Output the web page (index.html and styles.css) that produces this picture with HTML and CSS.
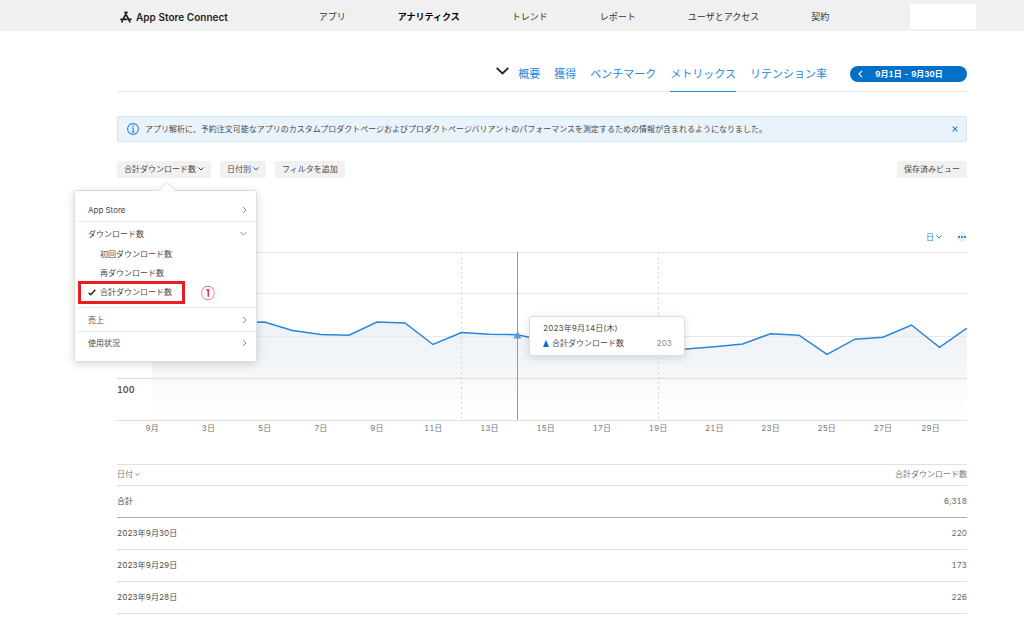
FILE: index.html
```html
<!DOCTYPE html>
<html lang="ja">
<head>
  <meta charset="utf-8">
  <meta name="viewport" content="width=device-width, initial-scale=1">
  <title>App Store Connect</title>
  <link rel="stylesheet" href="styles.css">
</head>
<body>
  <header class="topbar">
    <a class="brand" href="#">
      <svg width="12" height="12" viewBox="0 0 12 12" fill="none" stroke="#1d1d1f" stroke-width="1.7" stroke-linecap="round">
        <path d="M5 1.2l4.9 9.6M7 1.2L3.2 8M1 8.3h5.6M9 8.3h2M2.3 10l-.4.8"/>
      </svg>
      App Store Connect
    </a>
    <nav class="main-nav">
      <a href="#">アプリ</a>
      <a href="#" class="current">アナリティクス</a>
      <a href="#">トレンド</a>
      <a href="#">レポート</a>
      <a href="#">ユーザとアクセス</a>
      <a href="#">契約</a>
    </nav>
    <div class="account"></div>
  </header>

  <main class="content">
    <div class="subnav">
      <button class="app-toggle" aria-label="App">
        <svg width="13" height="8" viewBox="0 0 13 8" fill="none" stroke="#222" stroke-width="1.8"><path d="M.7 .9l5.8 5.6L12.3 .9"/></svg>
      </button>
      <nav class="tabs">
        <a href="#">概要</a>
        <a href="#">獲得</a>
        <a href="#">ベンチマーク</a>
        <a href="#" class="active">メトリックス</a>
        <a href="#">リテンション率</a>
      </nav>
      <button class="date-range">
        <svg width="5" height="8" viewBox="0 0 5 8" fill="none" stroke="#fff" stroke-width="1.1"><path d="M4 .8L1 4l3 3.2"/></svg>
        <span>9月1日 - 9月30日</span>
      </button>
    </div>

    <div class="notice">
      <svg width="12" height="12" viewBox="0 0 12 12" fill="none" stroke="#2a85d8">
        <circle cx="6" cy="6" r="5.4" stroke-width="1.1"/>
        <path d="M4.8 5h1.4v3.8M4.6 9h3" stroke-width="1.1"/>
        <circle cx="6" cy="3" r=".8" fill="#2a85d8" stroke="none"/>
      </svg>
      <p>アプリ解析に、予約注文可能なアプリのカスタムプロダクトページおよびプロダクトページバリアントのパフォーマンスを測定するための情報が含まれるようになりました。</p>
      <button class="close" aria-label="閉じる">
        <svg width="6" height="6" viewBox="0 0 6 6" stroke="#2a85d8" stroke-width="1.2"><path d="M.7 .7l4.6 4.6M5.3 .7L.7 5.3"/></svg>
      </button>
    </div>

    <div class="filters">
      <div class="metric">
        <button class="btn">合計ダウンロード数
          <svg width="6" height="4" viewBox="0 0 6 4" fill="none" stroke="#444"><path d="M.5 .5L3 3l2.5-2.5"/></svg>
        </button>
        <div class="menu">
          <button class="menu-row">App Store
            <svg width="5" height="8" viewBox="0 0 5 8" fill="none" stroke="#888"><path d="M1 1l3 3-3 3"/></svg>
          </button>
          <div class="menu-group">
            <button class="menu-row">ダウンロード数
              <svg width="7" height="5" viewBox="0 0 7 5" fill="none" stroke="#888"><path d="M.5 1l3 3 3-3"/></svg>
            </button>
            <button class="menu-item">初回ダウンロード数</button>
            <button class="menu-item">再ダウンロード数</button>
            <button class="menu-item selected">
              <svg width="8" height="7" viewBox="0 0 8 7" fill="none" stroke="#222" stroke-width="1.4"><path d="M.7 3.8l2 2L7.3 .8"/></svg>
              合計ダウンロード数
              <span class="highlight"></span>
              <span class="step">①</span>
            </button>
          </div>
          <button class="menu-row">売上
            <svg width="5" height="8" viewBox="0 0 5 8" fill="none" stroke="#888"><path d="M1 1l3 3-3 3"/></svg>
          </button>
          <button class="menu-row last">使用状況
            <svg width="5" height="8" viewBox="0 0 5 8" fill="none" stroke="#888"><path d="M1 1l3 3-3 3"/></svg>
          </button>
        </div>
      </div>
      <button class="btn">日付別
        <svg width="6" height="4" viewBox="0 0 6 4" fill="none" stroke="#444"><path d="M.5 .5L3 3l2.5-2.5"/></svg>
      </button>
      <button class="btn">フィルタを追加</button>
      <button class="btn saved">保存済みビュー</button>
    </div>

    <div class="chart-tools">
      <button class="interval">日
        <svg width="6" height="4" viewBox="0 0 6 4" fill="none" stroke="#2a85d8"><path d="M.5 .5L3 3l2.5-2.5"/></svg>
      </button>
      <button class="more" aria-label="その他">
        <svg width="8" height="2" viewBox="0 0 8 2" fill="#0070c9"><circle cx="1" cy="1" r="1"/><circle cx="4" cy="1" r="1"/><circle cx="7" cy="1" r="1"/></svg>
      </button>
    </div>

    <div class="chart">
      <svg class="plot" viewBox="0 0 850 169" preserveAspectRatio="none">
        <defs>
          <linearGradient id="fade" gradientUnits="userSpaceOnUse" x1="0" y1="70" x2="0" y2="168">
            <stop offset="0" stop-color="#edf2f7"/>
            <stop offset=".57" stop-color="#f5f7f9"/>
            <stop offset=".58" stop-color="#f8faf9"/>
            <stop offset="1" stop-color="#fff"/>
          </linearGradient>
        </defs>
        <path class="area" d="M35 76L63 80 91 74 119 71 147.500 70 175.500 78.500 204 82.500 232 83.200 260 70 288 71 316 92.500 344.500 80.500 372.500 82.300 400.500 82.700 429 89 457 93 485 96 513 98 541 99 569 97 597.500 94.700 625.500 92 653.500 81.800 682 83.200 710 102.300 738 87.200 766 85.200 794.500 73 822.500 95.300 850 76V168H35z"/>
        <path class="grid" d="M0 .5H850M0 41.500H850M0 84.500H850"/>
        <path class="grid strong" d="M0 126.500H850M0 168.500H850"/>
        <path class="marker" d="M344.500 0V168M541.500 0V168"/>
        <path class="cursor" d="M400.500 0V168"/>
        <path class="line" d="M35 76L63 80 91 74 119 71 147.500 70 175.500 78.500 204 82.500 232 83.200 260 70 288 71 316 92.500 344.500 80.500 372.500 82.300 400.500 82.700 429 89 457 93 485 96 513 98 541 99 569 97 597.500 94.700 625.500 92 653.500 81.800 682 83.200 710 102.300 738 87.200 766 85.200 794.500 73 822.500 95.300 850 76"/>
        <path class="point" d="M400.500 79l4 7.500h-8z"/>
      </svg>
      <span class="y-label">100</span>
      <div class="tooltip">
        <div>2023年9月14日(木)</div>
        <div class="tooltip-row">
          <svg width="6" height="7" viewBox="0 0 6 7" fill="#0070c9"><path d="M3 0l3 7H0z"/></svg>
          合計ダウンロード数 <span class="value">203</span>
        </div>
      </div>
    </div>
    <div class="x-labels">
      <span>9月</span><span>3日</span><span>5日</span><span>7日</span><span>9日</span>
      <span>11日</span><span>13日</span><span>15日</span><span>17日</span><span>19日</span>
      <span>21日</span><span>23日</span><span>25日</span><span>27日</span><span>29日</span>
    </div>

    <table class="data">
      <thead>
        <tr>
          <th>日付 <svg width="5" height="3" viewBox="0 0 5 3" fill="none" stroke="#888"><path d="M.5 .3l2 2 2-2"/></svg></th>
          <th>合計ダウンロード数</th>
        </tr>
      </thead>
      <tbody>
        <tr class="total"><td>合計</td><td>6,318</td></tr>
        <tr><td>2023年9月30日</td><td>220</td></tr>
        <tr><td>2023年9月29日</td><td>173</td></tr>
        <tr><td>2023年9月28日</td><td>226</td></tr>
      </tbody>
    </table>
  </main>
</body>
</html>
```
FILE: styles.css
```css
* {
  box-sizing: border-box;
}
body {
  margin: 0;
  background: #fff;
  color: #4a4a4a;
  font-family: Inter, "Noto Sans CJK JP", sans-serif;
  font-size: 8px;
  font-variant-numeric: tabular-nums;
  line-height: 12px;
}
a {
  color: inherit;
  text-decoration: none;
}
button {
  margin: 0;
  padding: 0;
  border: none;
  background: none;
  color: inherit;
  font: inherit;
  cursor: pointer;
}
svg {
  display: block;
  flex: none;
}

/* top bar */
.topbar {
  display: flex;
  align-items: center;
  height: 31px;
  padding: 2px 48px 0 120px;
  background: #f0f0f0;
  white-space: nowrap;
}
.brand {
  display: flex;
  align-items: center;
  gap: 4px;
  color: #1d1d1f;
  font-size: 10px;
  font-weight: 600;
}
.main-nav {
  display: flex;
  gap: 52px;
  margin-left: 91px;
  color: #333;
  font-size: 9px;
}
.main-nav .current {
  color: #000;
  font-weight: bold;
}
.account {
  width: 66px;
  height: 25px;
  margin-left: auto;
  background: #fff;
}

.content {
  padding: 0 57px 0 117px;
}

/* tabs and date range */
.subnav {
  display: flex;
  justify-content: flex-end;
  align-items: center;
  padding-top: 26px;
  border-bottom: 1px solid #e3e3e3;
}
.app-toggle {
  margin-right: 9px;
  padding-bottom: 6px;
}
.tabs {
  display: flex;
  gap: 14px;
  margin-bottom: -1px;
  color: #2a85d8;
  font-size: 11px;
  line-height: 34px;
}
.tabs a {
  border-bottom: 1px solid transparent;
}
.tabs .active {
  border-bottom-color: #2a85d8;
}
.date-range {
  display: flex;
  align-items: center;
  width: 117px;
  height: 16px;
  margin-left: 23px;
  padding: 0 12px 0 8px;
  border-radius: 8px;
  background: #0070c9;
  color: #fff;
  font-weight: bold;
}
.date-range span {
  flex: 1;
}

.notice {
  display: flex;
  align-items: center;
  gap: 6px;
  height: 26px;
  margin-top: 24px;
  padding: 0 8px 0 9px;
  border: 1px solid #d0e5f5;
  border-radius: 2px;
  background: #eaf3fa;
}
.notice p {
  margin: 0;
}
.notice .close {
  margin-left: auto;
}

/* filters */
.filters {
  display: flex;
  gap: 9px;
  margin-top: 19px;
}
.btn {
  display: flex;
  align-items: center;
  gap: 2px;
  height: 17px;
  padding: 0 7px 1px;
  border-radius: 2px;
  background: #f1f1f1;
  white-space: nowrap;
}
.saved {
  margin-left: auto;
}
.metric {
  position: relative;
}
.menu {
  position: absolute;
  z-index: 2;
  top: 29px;
  left: -43px;
  width: 183px;
  padding: 7px 0;
  border: 1px solid #ddd;
  border-radius: 3px;
  background: #fff;
  box-shadow: 0 2px 10px rgba(0, 0, 0, 0.16);
}
.menu::before {
  content: "";
  position: absolute;
  top: -8px;
  left: 84px;
  border: solid transparent;
  border-width: 0 8px 8px;
  border-bottom-color: #fff;
  filter: drop-shadow(0 -1px 1px rgba(0, 0, 0, 0.12));
}
.menu-row {
  display: flex;
  justify-content: space-between;
  align-items: center;
  width: 100%;
  height: 23px;
  padding: 0 9px 0 13px;
}
.menu-group {
  padding-bottom: 5px;
  border: solid #eee;
  border-width: 1px 0;
}
.menu .last {
  border-top: 1px solid #eee;
}
.menu-item {
  display: flex;
  align-items: center;
  position: relative;
  width: 100%;
  height: 19px;
  padding: 0 0 1px 25px;
}
.selected {
  gap: 4px;
  padding-left: 13px;
}
.highlight {
  position: absolute;
  top: -2px;
  left: 3px;
  width: 107px;
  height: 23px;
  border: 3px solid #ec1c24;
}
.step {
  position: absolute;
  left: 126px;
  color: #ec1c24;
  font-family: "Noto Sans CJK JP", sans-serif;
  font-size: 14px;
  font-weight: 500;
}

/* chart */
.chart-tools {
  display: flex;
  justify-content: flex-end;
  align-items: center;
  gap: 15px;
  height: 12px;
  margin-top: 53px;
  color: #2a85d8;
}
.interval {
  display: flex;
  align-items: center;
  gap: 2px;
}
.more {
  padding: 4px 1px;
  border-radius: 5px;
  background: #eee;
}
.chart {
  position: relative;
  margin-top: 9px;
}
.plot {
  width: 100%;
  height: 169px;
}
.plot path {
  fill: none;
  vector-effect: non-scaling-stroke;
}
.plot .area {
  fill: url(#fade);
}
.grid {
  stroke: #e8e8e8;
}
.strong {
  stroke: #dedede;
}
.marker {
  stroke: #d5d5d5;
  stroke-dasharray: 2 3;
}
.cursor {
  stroke: #999;
}
.line {
  stroke: #2a85d8;
  stroke-width: 1.5;
}
.plot .point {
  fill: #5b9fd8;
}
.y-label {
  position: absolute;
  bottom: 25px;
  left: 0;
  color: #555;
  font-size: 9px;
  font-weight: 600;
}
.tooltip {
  position: absolute;
  top: 64px;
  left: 412px;
  width: 156px;
  padding: 4px 12px 4px 13px;
  border: 1px solid #ddd;
  border-radius: 3px;
  background: #fff;
  box-shadow: 0 2px 8px rgba(0, 0, 0, 0.14);
  line-height: 15px;
}
.tooltip-row {
  display: flex;
  align-items: center;
  gap: 3px;
}
.tooltip .value {
  margin-left: auto;
  color: #888;
}
/* one column per two days, the last label is kept inside the plot */
.x-labels {
  display: grid;
  grid-template-columns: repeat(14, 1fr) 39px;
  margin: 1px 17px 0 7px;
  color: #777;
  text-align: center;
}

/* table */
.data {
  width: 100%;
  margin-top: 30px;
  border-collapse: collapse;
}
.data th,
.data td {
  height: 32px;
  padding: 0 0 2px;
  border-bottom: 1px solid #e0e0e0;
  text-align: left;
}
.data th {
  height: 21px;
  border-top: 1px solid #e0e0e0;
  color: #777;
  font-weight: normal;
}
.data th svg {
  display: inline-block;
  vertical-align: middle;
}
.data th:last-child,
.data td:last-child {
  text-align: right;
}
.data td:last-child {
  color: #666;
}
.data .total td {
  border-bottom-color: #aaa;
}
```
